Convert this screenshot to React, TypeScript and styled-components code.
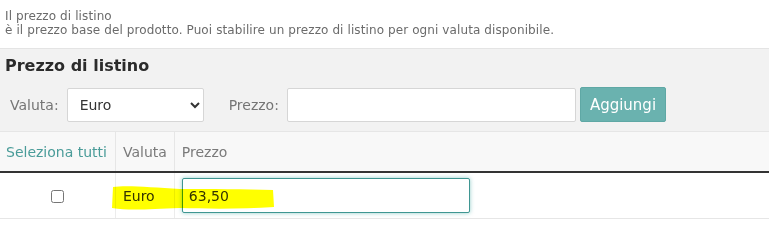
import styled, { createGlobalStyle } from 'styled-components';

const GlobalStyle = createGlobalStyle`
  body {
    margin: 0;
    background: #ffffff;
    font-family: "DejaVu Sans", Verdana, sans-serif;
  }
`;

const Intro = styled.div`
  padding: 9px 5px 11px;
  font-size: 12px;
  line-height: 14px;
  color: #6b6b6b;
  letter-spacing: 0.1px;
`;

const Panel = styled.section`
  background: #f2f2f2;
  border-top: 1px solid #e4e4e4;
`;

const Heading = styled.h2`
  margin: 0;
  padding: 6px 5px 0;
  font-size: 16px;
  line-height: 22px;
  font-weight: bold;
  color: #2b2b2b;
`;

const FormRow = styled.div`
  display: flex;
  align-items: center;
  padding: 10px 10px 9px;
`;

const Label = styled.label`
  font-size: 14px;
  color: #757575;
  margin-right: ${({ $gap }: { $gap: number }) => $gap}px;
`;

const Select = styled.select`
  width: 137px;
  height: 34px;
  padding: 0 8px 0 8px;
  border: 1px solid #d6d6d6;
  border-radius: 2px;
  background: #ffffff;
  font-family: inherit;
  font-size: 14px;
  color: #333;
  margin-right: 25px;
`;

const TextInput = styled.input`
  box-sizing: border-box;
  width: 289px;
  height: 34px;
  border: 1px solid #d6d6d6;
  border-radius: 2px;
  background: #ffffff;
  font-family: inherit;
  font-size: 14px;
  padding: 0 8px;
`;

const AddButton = styled.button`
  margin-left: 4px;
  height: 35px;
  padding: 0 9px;
  border: 1px solid #5fa8a5;
  border-radius: 2px;
  background: #6ab2af;
  color: #ffffff;
  font-family: inherit;
  font-size: 15px;
`;

const TableWrap = styled.div`
  position: relative;
`;

const Table = styled.table`
  width: 100%;
  border-collapse: collapse;
  font-size: 14px;
`;

const HeadCell = styled.th<{ $link?: boolean }>`
  height: 39px;
  padding: 0 7px;
  text-align: left;
  font-weight: normal;
  white-space: nowrap;
  background: #f8f8f8;
  color: ${({ $link }) => ($link ? '#4a9c99' : '#7a7a7a')};
  border-top: 1px solid #e6e6e6;
  border-bottom: 2px solid #333333;
  border-right: 1px solid #e6e6e6;
  &:first-child {
    padding-left: 6px;
    padding-right: 8px;
  }
  &:last-child {
    border-right: none;
    width: 100%;
  }
`;

const Cell = styled.td<{ $center?: boolean }>`
  height: 45px;
  padding: 0 7px;
  text-align: ${({ $center }) => ($center ? 'center' : 'left')};
  color: #333;
  border-bottom: 1px solid #e6e6e6;
  border-right: 1px solid #ececec;
  &:last-child {
    border-right: none;
  }
`;

const Check = styled.input`
  width: 13px;
  height: 13px;
  margin: 0;
  vertical-align: middle;
`;

const PriceInput = styled.input`
  box-sizing: border-box;
  width: 288px;
  height: 35px;
  padding: 0 6px;
  border: 1px solid #3f9692;
  border-radius: 2px;
  box-shadow: 0 0 4px rgba(74, 170, 165, 0.6);
  font-family: inherit;
  font-size: 14px;
  color: #333;
  outline: none;
`;

const Highlight = styled.svg`
  position: absolute;
  left: 0;
  top: 0;
  pointer-events: none;
  mix-blend-mode: multiply;
`;

export default function App() {
  return (
    <>
      <GlobalStyle />
      <Intro>
        Il prezzo di listino
        <br />
        è il prezzo base del prodotto. Puoi stabilire un prezzo di listino per ogni valuta disponibile.
      </Intro>
      <Panel>
        <Heading>Prezzo di listino</Heading>
        <FormRow>
          <Label $gap={8}>Valuta:</Label>
          <Select defaultValue="EUR">
            <option value="EUR">Euro</option>
          </Select>
          <Label $gap={8}>Prezzo:</Label>
          <TextInput />
          <AddButton>Aggiungi</AddButton>
        </FormRow>
      </Panel>
      <TableWrap>
        <Table>
          <thead>
            <tr>
              <HeadCell $link>Seleziona tutti</HeadCell>
              <HeadCell>Valuta</HeadCell>
              <HeadCell>Prezzo</HeadCell>
            </tr>
          </thead>
          <tbody>
            <tr>
              <Cell $center>
                <Check type="checkbox" />
              </Cell>
              <Cell>Euro</Cell>
              <Cell>
                <PriceInput defaultValue="63,50" />
              </Cell>
            </tr>
          </tbody>
        </Table>
        <Highlight width="300" height="90" viewBox="0 0 300 90">
          <path
            d="M113 56 C125 54 150 56 180 58 C210 58 245 58 273 59 L274 76 C245 78 210 78 180 77 C150 78 130 80 112 77 Z"
            fill="#ffff00"
          />
        </Highlight>
      </TableWrap>
    </>
  );
}
